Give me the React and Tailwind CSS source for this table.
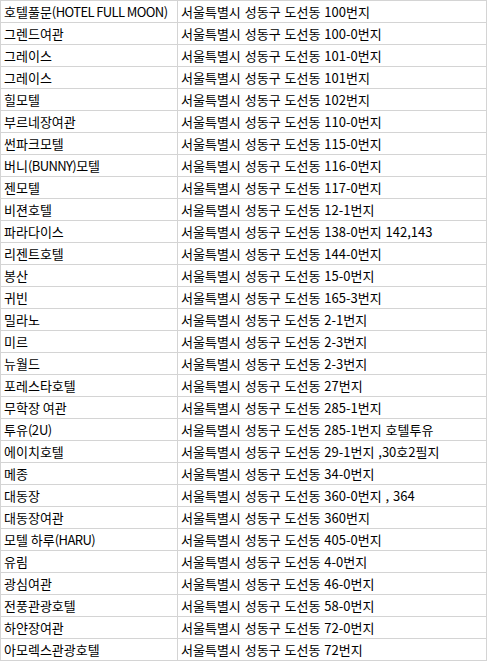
const ROWS = [
  ['호텔풀문(HOTEL FULL MOON)', '서울특별시 성동구 도선동 100번지'],
  ['그렌드여관', '서울특별시 성동구 도선동 100-0번지'],
  ['그레이스', '서울특별시 성동구 도선동 101-0번지'],
  ['그레이스', '서울특별시 성동구 도선동 101번지'],
  ['힐모텔', '서울특별시 성동구 도선동 102번지'],
  ['부르네장여관', '서울특별시 성동구 도선동 110-0번지'],
  ['썬파크모텔', '서울특별시 성동구 도선동 115-0번지'],
  ['버니(BUNNY)모텔', '서울특별시 성동구 도선동 116-0번지'],
  ['젠모텔', '서울특별시 성동구 도선동 117-0번지'],
  ['비젼호텔', '서울특별시 성동구 도선동 12-1번지'],
  ['파라다이스', '서울특별시 성동구 도선동 138-0번지 142,143'],
  ['리젠트호텔', '서울특별시 성동구 도선동 144-0번지'],
  ['봉산', '서울특별시 성동구 도선동 15-0번지'],
  ['귀빈', '서울특별시 성동구 도선동 165-3번지'],
  ['밀라노', '서울특별시 성동구 도선동 2-1번지'],
  ['미르', '서울특별시 성동구 도선동 2-3번지'],
  ['뉴월드', '서울특별시 성동구 도선동 2-3번지'],
  ['포레스타호텔', '서울특별시 성동구 도선동 27번지'],
  ['무학장 여관', '서울특별시 성동구 도선동 285-1번지'],
  ['투유(2U)', '서울특별시 성동구 도선동 285-1번지 호텔투유'],
  ['에이치호텔', '서울특별시 성동구 도선동 29-1번지 ,30호2필지'],
  ['메종', '서울특별시 성동구 도선동 34-0번지'],
  ['대동장', '서울특별시 성동구 도선동 360-0번지 , 364'],
  ['대동장여관', '서울특별시 성동구 도선동 360번지'],
  ['모텔 하루(HARU)', '서울특별시 성동구 도선동 405-0번지'],
  ['유림', '서울특별시 성동구 도선동 4-0번지'],
  ['광심여관', '서울특별시 성동구 도선동 46-0번지'],
  ['전풍관광호텔', '서울특별시 성동구 도선동 58-0번지'],
  ['하얀장여관', '서울특별시 성동구 도선동 72-0번지'],
  ['아모렉스관광호텔', '서울특별시 성동구 도선동 72번지'],
]

// latin runs render a bit wider than the source font, so pull them in
function Name({ text }) {
  return text.split(/([A-Za-z() ]*[A-Za-z()][A-Za-z() ]*)/).map((part, i) =>
    /[A-Za-z()]/.test(part)
      ? <span key={i} className="tracking-[-0.6px]">{part}</span>
      : <span key={i}>{part}</span>
  )
}

function Cell({ children, className = '' }) {
  return (
    <div className={`h-[22px] border-r border-b border-[#d4d4d4] pl-[3px] flex items-center whitespace-nowrap overflow-hidden ${className}`}>
      {children}
    </div>
  )
}

export default function App() {
  return (
    <div
      className="w-[487px] bg-white text-black text-[13px] leading-none grid grid-cols-[177px_309px] border-l border-t border-[#d4d4d4]"
      style={{ fontFamily: '"Noto Sans CJK KR", "Noto Sans", sans-serif' }}
    >
      {ROWS.map(([name, addr], i) => (
        <div key={i} className="contents">
          <Cell><Name text={name} /></Cell>
          <Cell className="[word-spacing:1px]">{addr}</Cell>
        </div>
      ))}
    </div>
  )
}
